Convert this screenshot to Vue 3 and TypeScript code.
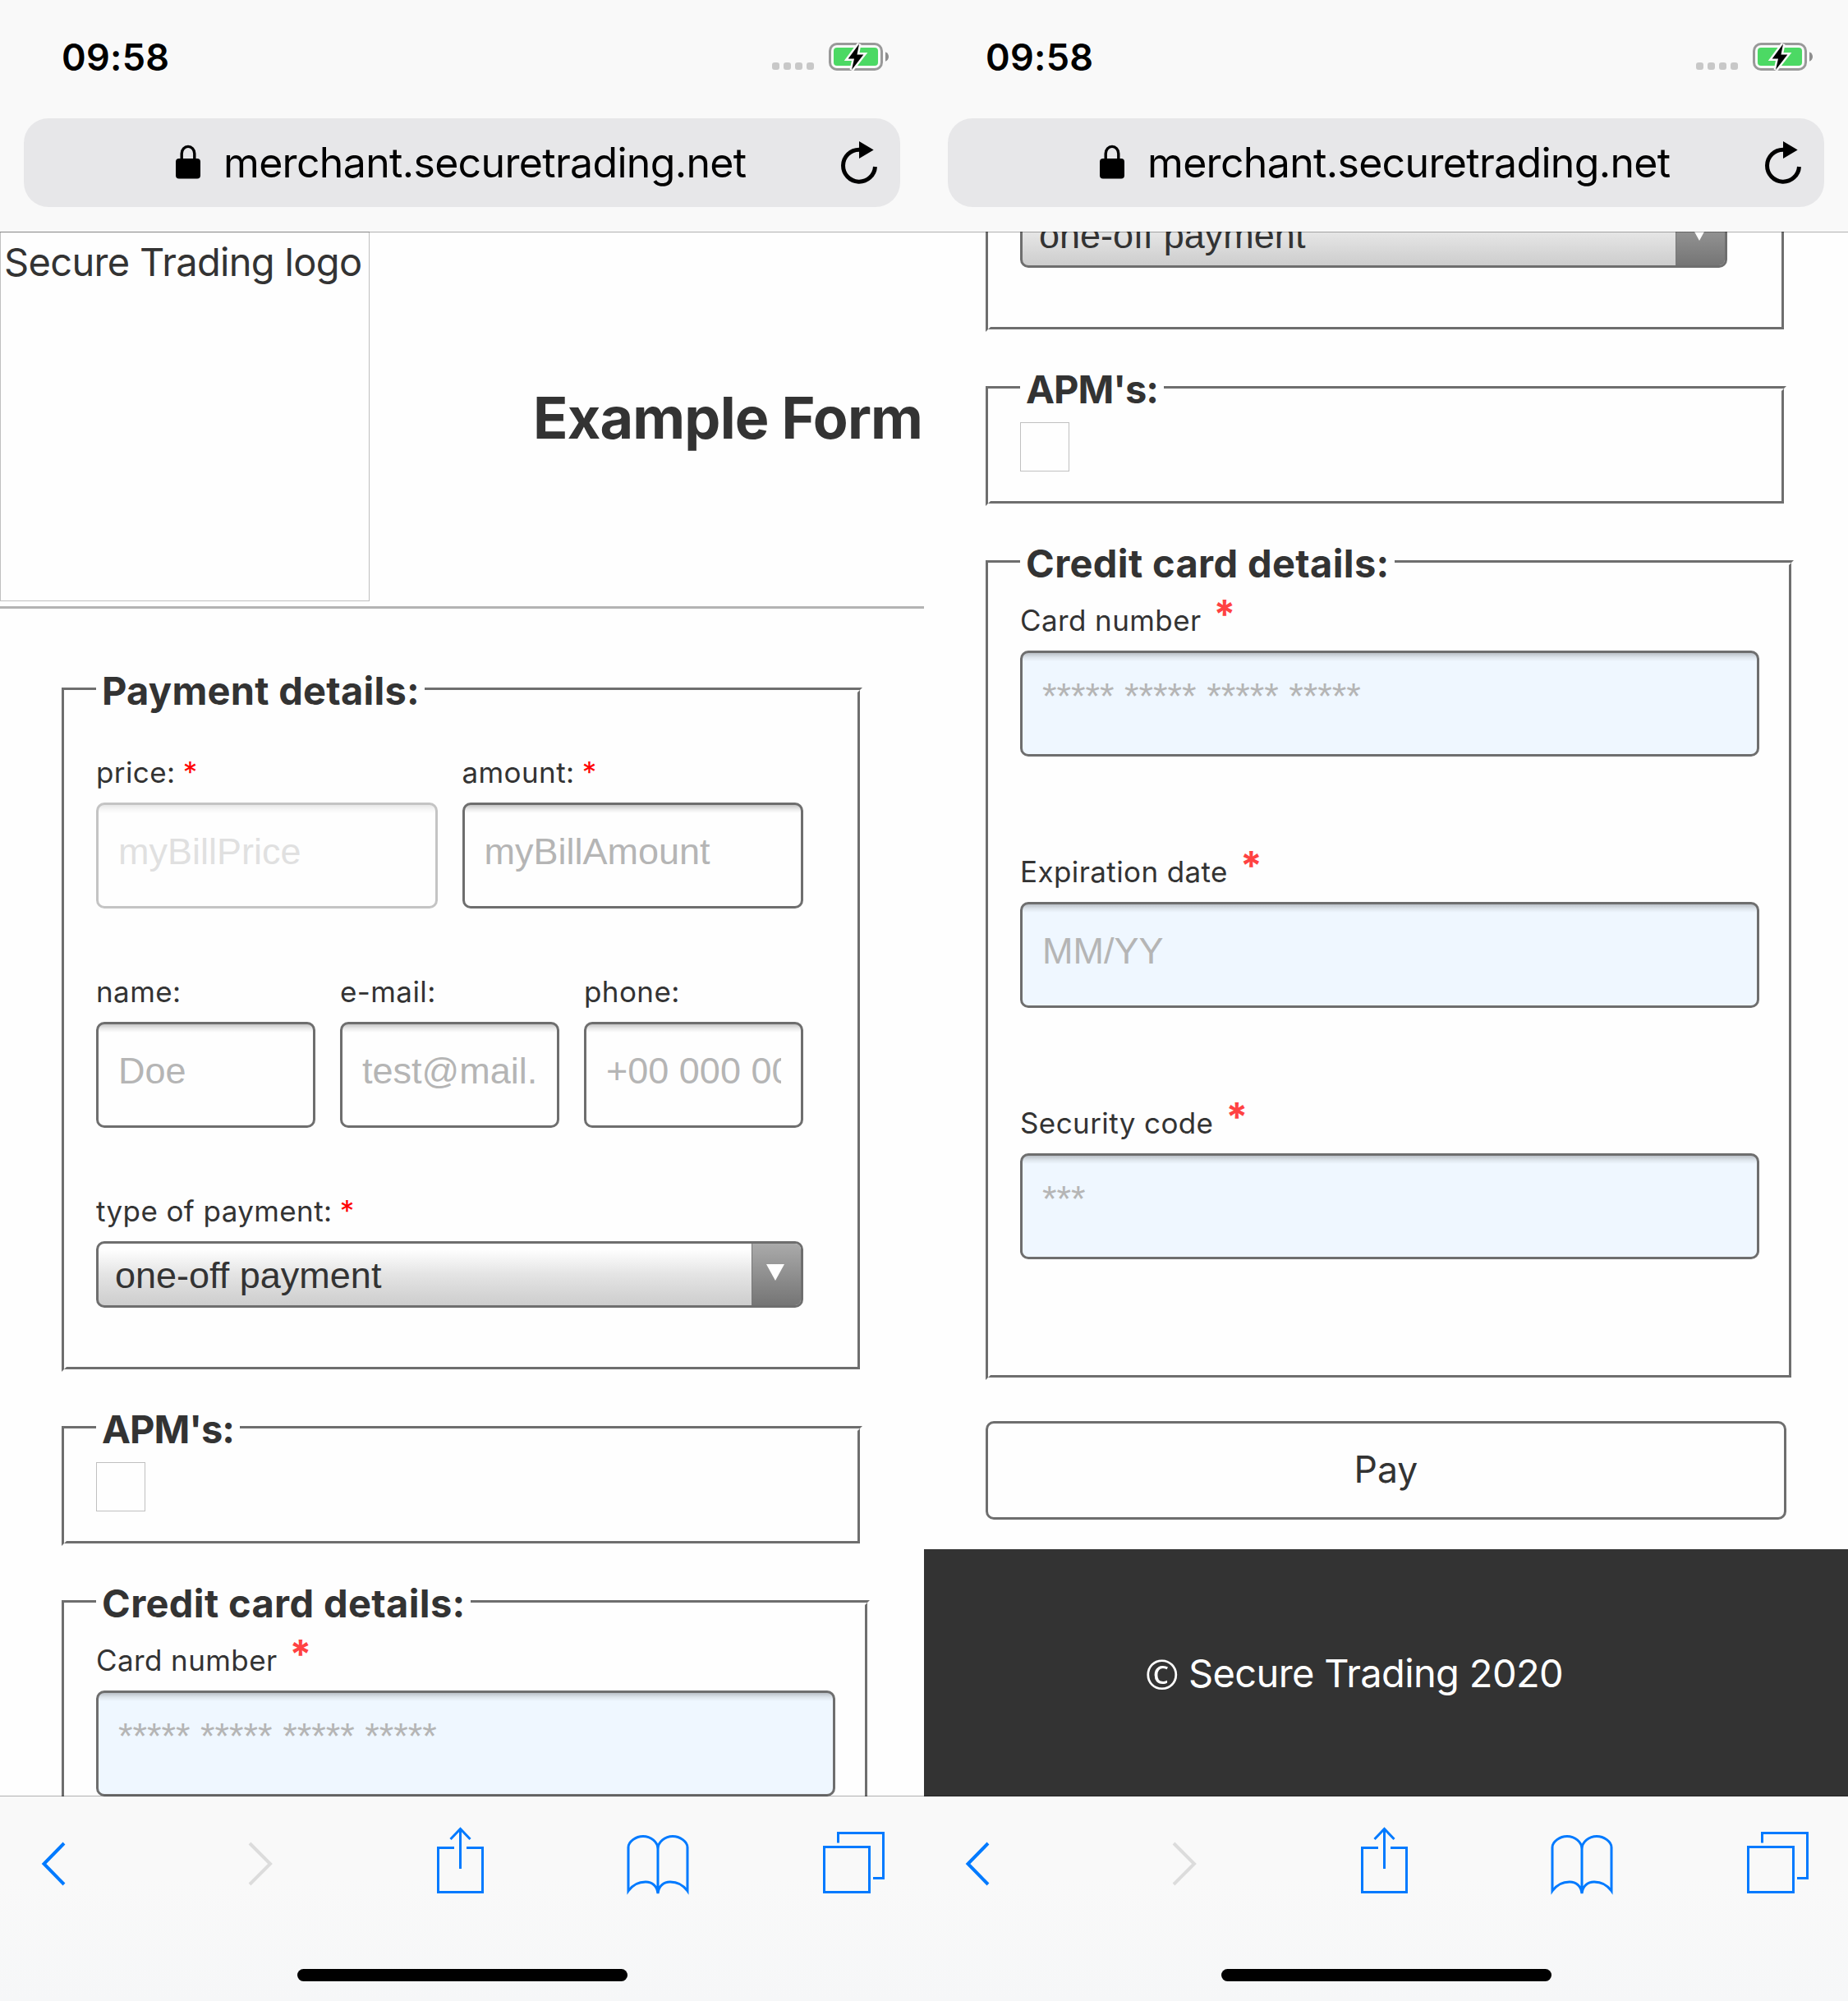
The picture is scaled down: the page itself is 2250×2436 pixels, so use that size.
<script setup lang="ts">
interface Field {
  label: string
  placeholder: string
  required?: boolean
  disabled?: boolean
  masked?: boolean
}

interface Screen {
  id: string
  scrolled: boolean
}

const screens: Screen[] = [
  { id: 'top', scrolled: false },
  { id: 'bottom', scrolled: true },
]

const paymentRows: Field[][] = [
  [
    { label: 'price:', placeholder: 'myBillPrice', required: true, disabled: true },
    { label: 'amount:', placeholder: 'myBillAmount', required: true },
  ],
  [
    { label: 'name:', placeholder: 'Doe' },
    { label: 'e-mail:', placeholder: 'test@mail.com' },
    { label: 'phone:', placeholder: '+00 000 000 000' },
  ],
]

const cardFields: Field[] = [
  { label: 'Card number', placeholder: '***** ***** ***** *****', masked: true },
  { label: 'Expiration date', placeholder: 'MM/YY' },
  { label: 'Security code', placeholder: '***', masked: true },
]
</script>

<template>
  <main class="screens">
    <section v-for="screen in screens" :key="screen.id" class="phone">
      <header class="chrome-top">
        <div class="status">
          <span class="time">09:58</span>
          <span class="signal"><i v-for="n in 4" :key="n"></i></span>
          <svg class="battery" width="74" height="40" viewBox="0 0 74 40">
            <rect x="1.5" y="4.5" width="63" height="31" rx="8.5" fill="none" stroke="#999" stroke-width="3" />
            <rect x="6" y="9" width="54" height="22" rx="4" fill="#4cd964" />
            <path d="M69 14.2Q73 16 73 20T69 25.8Z" fill="#8e8e8e" />
            <path d="M37 4.5 23.7 22.5H31L28 36 42.3 17.5H34.5Z" fill="#000" stroke="#f9f9f9" stroke-width="5" paint-order="stroke" />
          </svg>
        </div>
        <div class="address">
          <svg class="lock" width="30" height="42" viewBox="0 0 30 42">
            <path d="M7.2 20V11a7.8 8.6 0 0 1 15.6 0v9" fill="none" stroke="#000" stroke-width="3.4" />
            <rect y="17" width="30" height="24.5" rx="4" />
          </svg>
          <span class="url">merchant.securetrading.net</span>
          <svg class="reload" width="46" height="54" viewBox="0 0 46 54">
            <path d="M23 12.2A19.5 19.5 0 1 0 42.5 33" fill="none" stroke="#000" stroke-width="5" />
            <path d="M23 2 40.7 12.6 23 23Z" />
          </svg>
        </div>
      </header>

      <div class="viewport">
        <div class="page" :class="{ scrolled: screen.scrolled }">
          <div class="masthead">
            <div class="logo">Secure Trading logo</div>
            <h1>Example Form</h1>
          </div>

          <div class="form">
            <div class="group payment">
              <span class="legend">Payment details:</span>
              <div v-for="(row, r) in paymentRows" :key="r" class="row">
                <div v-for="field in row" :key="field.label" class="field">
                  <div class="label">{{ field.label }} <b v-if="field.required">*</b></div>
                  <div class="input" :class="{ disabled: field.disabled }"><span>{{ field.placeholder }}</span></div>
                </div>
              </div>
              <div class="row">
                <div class="field">
                  <div class="label">type of payment: <b>*</b></div>
                  <div class="select">
                    <span>one-off payment</span>
                    <div class="arrow">
                      <svg width="22" height="20" viewBox="0 0 22 20"><path d="M0 0H22L11 20Z" fill="#fff" /></svg>
                    </div>
                  </div>
                </div>
              </div>
            </div>

            <div class="group apms">
              <span class="legend apm-legend">APM's:</span>
              <div class="apm-box"></div>
            </div>

            <div class="group card">
              <span class="legend card-legend">Credit card details:</span>
              <div v-for="field in cardFields" :key="field.label" class="card-field">
                <div class="label">{{ field.label }}<em>*</em></div>
                <div class="input tinted" :class="{ masked: field.masked }"><span>{{ field.placeholder }}</span></div>
              </div>
            </div>

            <button class="pay" type="button">Pay</button>
          </div>
          <footer class="footer"><span class="copy">©</span>Secure Trading 2020</footer>
        </div>
      </div>

      <nav class="toolbar">
        <svg width="1125" height="249" viewBox="0 0 1125 249" fill="none" stroke="#007aff" stroke-width="3">
          <path d="M78 57 53.5 82 78 107" stroke-width="4" />
          <path d="M304 57 329 82 304 107" stroke="#dcdcdc" stroke-width="4" />
          <path d="M553 62.500H533.500V116.500H587.500V62.500H568M560.500 88V39.500M548.500 52 560.500 39.500 572.500 52" />
          <path d="M801 118V64C801 55 792 48.500 783 48.500S765 55 765 62V115C770 108 778 104 786 104S800 109 801 118C802 109 808 104 816 104S832 108 837 115V62C837 55 828 48.500 819 48.500S801 55 801 64" />
          <path d="M1003.500 61.500H1058.500V116.500H1003.500ZM1020.500 56.500V44.500H1075.500V99.500H1063" />
        </svg>
        <div class="home"></div>
      </nav>
    </section>
  </main>
</template>

<style>
body {
  margin: 0;
  background: #fefefe;
}
</style>

<style scoped>
.screens {
  display: flex;
  width: 2250px;
  height: 2436px;
  overflow: hidden;
  color: #333;
  font-family: Inter, "Liberation Sans", sans-serif;
}
.phone {
  display: flex;
  flex-direction: column;
  width: 1125px;
  height: 2436px;
  overflow: hidden;
}
.chrome-top {
  position: relative;
  z-index: 1;
  flex: none;
  box-sizing: border-box;
  height: 282px;
  padding: 42px 29px 0;
  background: #f9f9f9;
  box-shadow: 0 1px 0 rgba(0, 0, 0, 0.3);
  color: #000;
}
.status {
  display: flex;
  height: 102px;
  padding: 0 12px 0 46px;
}
.time {
  width: 865px;
  font-size: 45px;
  font-weight: 600;
  line-height: 55px;
  letter-spacing: 0.3px;
}
.signal {
  display: flex;
  gap: 5px;
  width: 69px;
  padding-top: 34px;
}
.signal i {
  width: 9px;
  height: 9px;
  border-radius: 3px;
  background: #c8c8c8;
}
.battery {
  flex: none;
  margin-top: 7px;
}
.address {
  display: flex;
  height: 108px;
  border-radius: 30px;
  background: #e7e7e9;
  line-height: 108px;
}
.lock {
  flex: none;
  margin: 32px 28px 0 185px;
}
.url {
  width: 723px;
  font-size: 50px;
  letter-spacing: -0.67px;
  white-space: nowrap;
}
.reload {
  flex: none;
  margin-top: 26px;
  margin-left: 28px;
}
.viewport {
  flex: none;
  height: 1905px;
  overflow: hidden;
  background: #fefefe;
}
.page.scrolled {
  margin-top: -1266px;
}
.masthead {
  display: flex;
  height: 456px;
  border-bottom: 3px solid #b3b3b3;
}
.logo {
  box-sizing: border-box;
  flex: none;
  width: 450px;
  height: 450px;
  padding: 7px 0 0 4px;
  border: 1px solid #c0c0c0;
  font-size: 47px;
  line-height: 58px;
  letter-spacing: -0.66px;
  white-space: nowrap;
}
h1 {
  margin: 185px 0 0 199px;
  font-size: 70px;
  font-weight: 700;
  line-height: 84px;
  letter-spacing: -0.8px;
  white-space: nowrap;
}
.form {
  padding: 96px 66px 36px 75px;
}
.group {
  position: relative;
  box-sizing: border-box;
  width: 975px;
  margin-bottom: 66px;
  padding-left: 39px;
  border: 3px solid;
  border-color: #6e6e6e transparent transparent #6e6e6e;
}
/* inner half of the grooved frame */
.group::after {
  content: "";
  position: absolute;
  inset: 0;
  border: 3px solid;
  border-color: transparent #6e6e6e #6e6e6e transparent;
}
.payment {
  height: 833px;
}
.apms {
  height: 146px;
}
.card {
  width: 984px;
  height: 998px;
  margin-bottom: 50px;
}
.legend {
  display: block;
  position: relative;
  box-sizing: border-box;
  width: 400px;
  height: 58px;
  margin-top: -28px;
  padding-left: 7px;
  background: #fefefe;
  font-size: 47px;
  font-weight: 700;
  line-height: 58px;
  letter-spacing: 0.25px;
  white-space: nowrap;
}
.apm-legend {
  width: 175px;
  letter-spacing: -1px;
}
.card-legend {
  width: 456px;
  letter-spacing: 0.36px;
}
.row {
  display: flex;
  gap: 30px;
  width: 861px;
  margin-top: 80px;
}
.legend + .row {
  margin-top: 49px;
}
.field {
  flex: 1 1 0;
  min-width: 0;
}
.label {
  height: 42px;
  margin-bottom: 16px;
  font-size: 35px;
  line-height: 42px;
  letter-spacing: 0.4px;
  white-space: nowrap;
}
.label b {
  margin-left: -1px;
  color: #f00;
  font-weight: 400;
}
.label em {
  position: relative;
  top: -3px;
  margin-left: 15px;
  color: #ff4242;
  font-size: 48px;
  font-style: normal;
  font-weight: 700;
  line-height: 0;
}
.input {
  box-sizing: border-box;
  height: 129px;
  padding: 0 24px;
  border: 3px solid #6e6e6e;
  border-radius: 10px;
  background: linear-gradient(rgba(0, 0, 0, 0.22), rgba(0, 0, 0, 0.08) 5px, transparent 10px) #fefefe;
}
.input span {
  display: block;
  overflow: hidden;
  color: #b5b5b5;
  font-family: "Liberation Sans", Arial, sans-serif;
  font-size: 45px;
  line-height: 113px;
  white-space: nowrap;
}
.input.disabled {
  opacity: 0.4;
}
.input.tinted {
  background-color: #eff7ff;
}
.input.masked span {
  line-height: 105px;
}
.select {
  display: flex;
  justify-content: space-between;
  box-sizing: border-box;
  height: 81px;
  overflow: hidden;
  padding-left: 20px;
  border: 3px solid #6e6e6e;
  border-radius: 10px;
  background: linear-gradient(#fefefe 10%, #e4e4e4 50%, #cdcdcd);
  font-family: "Liberation Sans", Arial, sans-serif;
  font-size: 45px;
  line-height: 77px;
}
.arrow {
  display: flex;
  justify-content: center;
  box-sizing: border-box;
  width: 60px;
  height: 75px;
  padding: 25px 4px 0 0;
  border-left: 1px solid #777;
  background: linear-gradient(#aaa, #757575);
}
.apm-box {
  box-sizing: border-box;
  width: 60px;
  height: 60px;
  margin-top: 11px;
  border: 1px solid #c0c0c0;
}
.card-field {
  width: 900px;
  margin-top: 119px;
}
.legend + .card-field {
  margin-top: 19px;
}
.pay {
  display: block;
  box-sizing: border-box;
  width: 975px;
  height: 120px;
  padding: 0 0 2px;
  border: 3px solid #6e6e6e;
  border-radius: 10px;
  background: #fefefe;
  color: #333;
  font-family: inherit;
  font-size: 44.500px;
  line-height: 112px;
}
.footer {
  display: flex;
  box-sizing: border-box;
  height: 301px;
  padding: 122px 0 0 269px;
  background: #333;
  color: #fff;
  font-size: 47px;
  line-height: 58px;
  letter-spacing: -0.64px;
  white-space: nowrap;
}
.copy {
  width: 53px;
  padding-top: 1px;
  font-family: "Open Sans", sans-serif;
  font-size: 50px;
}
.toolbar {
  position: relative;
  z-index: 1;
  display: flex;
  flex-direction: column;
  flex: none;
  height: 249px;
  background: linear-gradient(#f9f9f9 40%, #f6f7f8);
  box-shadow: 0 -1px 0 rgba(0, 0, 0, 0.3);
}
.toolbar svg {
  flex: none;
}
.home {
  flex: none;
  width: 402px;
  height: 15px;
  margin: -39px 0 0 362px;
  border-radius: 8px;
  background: #000;
}
</style>
